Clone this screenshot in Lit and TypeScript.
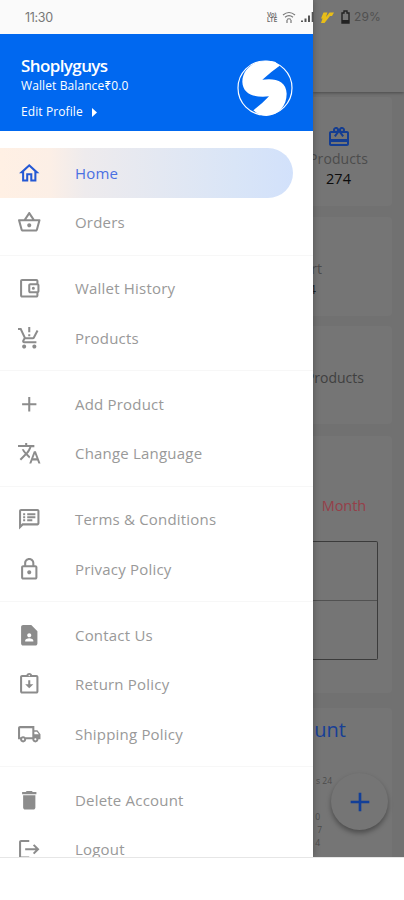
import { LitElement, html, css, svg } from "lit";
import { customElement, property } from "lit/decorators.js";

const ICONS: Record<string, string> = {
  home: "M12 5.69l5 4.5V18h-2v-6H9v6H7v-7.81l5-4.5M12 3L2 12h3v8h6v-6h2v6h6v-8h3L12 3z",
  basket: "M22 9h-4.79l-4.38-6.56c-.19-.28-.51-.42-.83-.42s-.64.14-.83.43L6.79 9H2c-.55 0-1 .45-1 1 0 .09.01.18.04.27l2.54 9.27c.23.84 1 1.46 1.92 1.46h13c.92 0 1.69-.62 1.93-1.46l2.54-9.27L23 10c0-.55-.45-1-1-1zM12 4.8L14.8 9H9.2L12 4.8zM18.5 19l-12.99.01L3.31 11H20.7l-2.2 8zM12 13c-1.1 0-2 .9-2 2s.9 2 2 2 2-.9 2-2-.9-2-2-2z",
  wallet: "M21 7.28V5c0-1.1-.9-2-2-2H5c-1.11 0-2 .9-2 2v14c0 1.1.89 2 2 2h14c1.1 0 2-.9 2-2v-2.28c.59-.35 1-.98 1-1.72V9c0-.74-.41-1.37-1-1.72zM20 9v6h-7V9h7zM5 19V5h14v2h-6c-1.1 0-2 .9-2 2v6c0 1.1.9 2 2 2h6v2H5zM16 10.5a1.5 1.5 0 1 0 0 3 1.5 1.5 0 0 0 0-3z",
  cart: "M13 10h-2V8h2v2zm0-4h-2V1h2v5zM7 18c-1.1 0-1.99.9-1.99 2S5.9 22 7 22s2-.9 2-2-.9-2-2-2zm10 0c-1.1 0-1.99.9-1.99 2s.89 2 1.99 2 2-.9 2-2-.9-2-2-2zm-8.9-5h7.45c.75 0 1.41-.41 1.75-1.03L21 4.96 19.25 4l-3.7 7H8.53L4.27 2H1v2h2l3.6 7.59-1.35 2.44C4.52 15.37 5.48 17 7 17h12v-2H7l1.1-2z",
  add: "M19 13h-6v6h-2v-6H5v-2h6V5h2v6h6v2z",
  translate: "M12.87 15.07l-2.54-2.51.03-.03c1.74-1.94 2.98-4.17 3.71-6.53H17V4h-7V2H8v2H1v1.99h11.17C11.5 7.92 10.44 9.75 9 11.35 8.07 10.32 7.3 9.19 6.69 8h-2c.73 1.63 1.73 3.17 2.98 4.56l-5.09 5.02L4 19l5-5 3.11 3.11.76-2.04zM18.5 10h-2L12 22h2l1.12-3h4.75L21 22h2l-4.5-12zm-2.62 7l1.62-4.33L19.12 17h-3.24z",
  notes: "M20 2H4c-1.1 0-1.99.9-1.99 2L2 22l4-4h14c1.1 0 2-.9 2-2V4c0-1.1-.9-2-2-2zm0 14H5.17L4 17.17V4h16v12zM6 12h2v2H6zm0-3h2v2H6zm0-3h2v2H6zm4 6h5v2h-5zm0-3h8v2h-8zm0-3h8v2h-8z",
  lock: "M18 8h-1V6c0-2.76-2.24-5-5-5S7 3.24 7 6v2H6c-1.1 0-2 .9-2 2v10c0 1.1.9 2 2 2h12c1.1 0 2-.9 2-2V10c0-1.1-.9-2-2-2zM9 6c0-1.66 1.34-3 3-3s3 1.34 3 3v2H9V6zm9 14H6V10h12v10zm-6-3c1.1 0 2-.9 2-2s-.9-2-2-2-2 .9-2 2 .9 2 2 2z",
  contact: "M14 2H6c-1.1 0-2 .9-2 2v16c0 1.1.89 2 1.99 2H18c1.1 0 2-.9 2-2V8l-6-6zm-2 8c1.1 0 2 .9 2 2s-.9 2-2 2-2-.9-2-2 .9-2 2-2zm4 8H8v-.57c0-.81.48-1.53 1.22-1.85a6.95 6.95 0 0 1 5.56 0c.74.32 1.22 1.04 1.22 1.85V18z",
  returned: "M16 12h-3V8h-2v4H8l4 4 4-4zM19 3h-4.18C14.4 1.84 13.3 1 12 1s-2.4.84-2.82 2H5c-1.1 0-2 .9-2 2v14c0 1.1.9 2 2 2h14c1.1 0 2-.9 2-2V5c0-1.1-.9-2-2-2zm-7-.25c.41 0 .75.34.75.75s-.34.75-.75.75-.75-.34-.75-.75.34-.75.75-.75zM19 19H5V5h14v14z",
  shipping: "M20 8h-3V4H3c-1.1 0-2 .9-2 2v11h2c0 1.66 1.34 3 3 3s3-1.34 3-3h6c0 1.66 1.34 3 3 3s3-1.34 3-3h2v-5l-3-4zm-.5 1.5l1.96 2.5H17V9.5h2.5zM6 18c-.55 0-1-.45-1-1s.45-1 1-1 1 .45 1 1-.45 1-1 1zm2.22-3c-.55-.61-1.33-1-2.22-1s-1.67.39-2.22 1H3V6h12v9H8.22zM18 18c-.55 0-1-.45-1-1s.45-1 1-1 1 .45 1 1-.45 1-1 1z",
  trash: "M6 19c0 1.1.9 2 2 2h8c1.1 0 2-.9 2-2V7H6v12zM19 4h-3.5l-1-1h-5l-1 1H5v2h14V4z",
  logout: "M17 7l-1.41 1.41L18.17 11H8v2h10.17l-2.58 2.58L17 17l5-5zM4 5h8V3H4c-1.1 0-2 .9-2 2v14c0 1.1.9 2 2 2h8v-2H4V5z",
  redeem: "M20 6h-2.18c.11-.31.18-.65.18-1 0-1.66-1.34-3-3-3-1.05 0-1.96.54-2.5 1.35l-.5.67-.5-.68C10.96 2.54 10.05 2 9 2 7.34 2 6 3.34 6 5c0 .35.07.69.18 1H4c-1.11 0-1.99.89-1.99 2L2 19c0 1.11.89 2 2 2h16c1.11 0 2-.89 2-2V8c0-1.11-.89-2-2-2zm-5-2c.55 0 1 .45 1 1s-.45 1-1 1-1-.45-1-1 .45-1 1-1zM9 4c.55 0 1 .45 1 1s-.45 1-1 1-1-.45-1-1 .45-1 1-1zm11 15H4v-2h16v2zm0-5H4V8h5.08L7 10.83 8.62 12 11 8.76l1-1.36 1 1.36L15.38 12 17 10.83 14.92 8H20v6z",
};

const MENU: [string, string][][] = [
  [["home", "Home"], ["basket", "Orders"]],
  [["wallet", "Wallet History"], ["cart", "Products"]],
  [["add", "Add Product"], ["translate", "Change Language"]],
  [["notes", "Terms & Conditions"], ["lock", "Privacy Policy"]],
  [["contact", "Contact Us"], ["returned", "Return Policy"], ["shipping", "Shipping Policy"]],
  [["trash", "Delete Account"], ["logout", "Logout"]],
];

@customElement("md-icon")
class MdIcon extends LitElement {
  @property() name = "";
  static styles = css`
    :host { display: block; width: 24px; height: 24px; flex: none; }
    svg { display: block; width: 100%; height: 100%; fill: currentColor; }
  `;
  render() {
    return html`<svg viewBox="0 0 24 24">${svg`<path fill-rule="evenodd" d=${ICONS[this.name]}></path>`}</svg>`;
  }
}

@customElement("status-bar")
class StatusBar extends LitElement {
  static styles = css`
    :host { display: flex; justify-content: space-between; align-items: center; height: 34px; padding: 0 24px 0 25px; box-sizing: border-box; font: 12.5px/16px Inter, sans-serif; color: #777; }
    .time { letter-spacing: -0.3px; padding-top: 1px; }
    .right { display: flex; align-items: center; }
    .volte { display: grid; font-size: 6px; line-height: 5.5px; font-weight: 600; width: 12px; color: #666; margin-right: 2px; }
    .wifi { width: 14px; height: 12px; margin-left: 1px; }
    .signal { width: 13px; height: 12px; margin-left: 5px; }
    .flash { width: 15px; height: 13px; margin-left: 6px; }
    .battery { width: 9px; height: 14px; margin: 0 4px 0 6px; }
    .pct { color: #505050; width: 26px; font-size: 12px; letter-spacing: 0.1px; white-space: nowrap; }
  `;
  render() {
    return html`
      <span class="time">11:30</span>
      <div class="right">
        <span class="volte"><span>Vo)</span><span>LTE</span></span>
        <svg class="wifi" viewBox="0 0 14 12" fill="none" stroke="#777" stroke-width="1.2">
          <path d="M1 4Q7-1 13 4M3 6.3Q7 3 11 6.3M5 8.5Q7 7 9 8.5"></path>
          <path d="M5 9v3M9 9v3"></path>
        </svg>
        <svg class="signal" viewBox="0 0 13 12" fill="#555">
          <path d="M0 9.5h2V11H0zM3.5 7.5h2V11h-2zM7 4.5h2V11H7zM10.7 1h2v10h-2z"></path>
        </svg>
        <svg class="flash" viewBox="0 0 15 13" fill="#e8bd18">
          <path d="M3.5 1.5H7.5L6 6 9.5 1.5H14L12 5H10L4.5 12H1L2.5 7.5H1z"></path>
        </svg>
        <svg class="battery" viewBox="0 0 9 14">
          <path d="M3 1h3v2h2v10H1V3h2z" fill="none" stroke="#222" stroke-width="1.4"></path>
          <path d="M1 10h7v3H1z" fill="#222"></path>
        </svg>
        <span class="pct">29%</span>
      </div>`;
  }
}

@customElement("side-drawer")
class SideDrawer extends LitElement {
  static styles = css`
    :host { display: flex; flex-direction: column; background: #fff; color: #999; }
    .strip { height: 34px; background: #fafafa; flex: none; }
    .head { height: 97px; flex: none; box-sizing: border-box; background: #0068f0; color: #fff; display: flex; justify-content: space-between; align-items: flex-start; padding: 20px 19px 0 21px; }
    .who { display: flex; flex-direction: column; white-space: nowrap; }
    .name { font-size: 17px; line-height: 23px; font-weight: 600; letter-spacing: -0.6px; }
    .bal { font-size: 12px; line-height: 16px; font-weight: 500; letter-spacing: 0.1px; margin-top: 1px; }
    .edit { display: flex; align-items: center; gap: 9px; font-size: 12px; line-height: 16px; font-weight: 500; letter-spacing: 0.1px; margin-top: 10px; }
    .tri { width: 5px; height: 9px; fill: #fff; }
    .logo { width: 58px; height: 58px; margin-top: 5px; }
    nav { padding-top: 17px; }
    .group + .group { border-top: 1px solid #f7f7f7; margin-top: 7.5px; padding-top: 8px; }
    .row { height: 49.5px; display: flex; align-items: center; gap: 33.5px; padding-left: 17px; margin-right: 20px; font-size: 15px; letter-spacing: 0.2px; white-space: nowrap; box-sizing: border-box; }
    .active { color: #4a70e2; background: linear-gradient(90deg, #fff0e4 0, #fcefe6 50px, #eeebed 85px, #d9e5f7 235px, #d2e1fb 100%); border-radius: 0 25px 25px 0; }
    .active md-icon { color: #2458d4; }
    md-icon { color: #8c8c8c; width: 24.5px; height: 24.5px; }
  `;
  render() {
    return html`
      <div class="strip"></div>
      <div class="head">
        <div class="who">
          <span class="name">Shoplyguys</span>
          <span class="bal">Wallet Balance₹0.0</span>
          <span class="edit">Edit Profile <svg class="tri" viewBox="0 0 5 9"><path d="M0 0l5 4.5L0 9z"></path></svg></span>
        </div>
        <svg class="logo" viewBox="49 56 174 174">
          <circle cx="136" cy="143" r="81" fill="none" stroke="#fff" stroke-width="3.5"></circle>
          <path fill="#fff" d="M112 66Q138 57 166 64L180 76Q154 94 128 118C166 112 200 122 201 160C201 196 178 224 140 227Q118 225 101 210Q128 190 148 168C106 173 69 162 68 124C68 96 88 74 112 66z"></path>
        </svg>
      </div>
      <nav>
        ${MENU.map((group) => html`<div class="group">
          ${group.map(([icon, label]) => html`<div class="row ${icon === "home" ? "active" : ""}">
            <md-icon name=${icon}></md-icon><span>${label}</span>
          </div>`)}
        </div>`)}
      </nav>`;
  }
}

@customElement("dimmed-page")
class DimmedPage extends LitElement {
  static styles = css`
    :host { display: flex; flex-direction: column; background: #717171; overflow: hidden; color: #4c4c4c; }
    .bar { height: 92px; flex: none; background: #757575; box-shadow: 0 1px 3px #4a4a4a; margin-bottom: 5px; }
    .card { flex: none; box-sizing: border-box; background: #757575; margin-right: 12px; border-radius: 0 4px 4px 0; white-space: nowrap; display: flex; flex-direction: column; align-items: flex-end; }
    .total { height: 109px; margin-bottom: 11px; padding: 28px 28px 0 0; align-items: center; font-size: 14px; line-height: 20px; }
    .total md-icon { color: #143d91; }
    .total .label { letter-spacing: 0.1px; }
    .total b { color: #0c0c0c; font-size: 14.5px; font-weight: 500; }
    .sort { height: 99px; margin-bottom: 10px; padding: 42px 70px 0 0; font-size: 14px; line-height: 20px; }
    .sort b { padding-right: 6px; font-weight: 500; color: #222; font-size: 13px; }
    .low { height: 98px; margin-bottom: 12px; padding: 42px 28px 0 0; font-size: 14px; line-height: 20px; color: #404040; }
    .chart { height: 257px; margin-bottom: 15px; padding: 60px 14px 0 0; align-items: stretch; }
    .month { text-align: right; color: #963f49; font-size: 14.5px; line-height: 20px; padding-right: 12px; margin-bottom: 24.5px; letter-spacing: -0.1px; }
    .grid { border: 1.5px solid #3b3b3b; border-left: 0; height: 119px; box-sizing: border-box; display: grid; grid-template-rows: 1fr 1fr; border-radius: 0 2px 2px 0; }
    .cell + .cell { border-top: 1px solid #515151; }
    .account { height: 160px; padding: 8px 46px 0 0; font-size: 8.5px; line-height: 13px; }
    .title { font-size: 20px; line-height: 28px; color: #173f96; margin-bottom: 30px; }
    .year { padding-right: 14px; margin-bottom: 23px; }
    .n { padding-right: 26px; }
    .n.wide { padding-right: 24px; }
  `;
  render() {
    return html`
      <div class="bar"></div>
      <div class="card total"><md-icon name="redeem"></md-icon><span class="label">Products</span><b>274</b></div>
      <div class="card sort"><span>rt</span><b>4</b></div>
      <div class="card low"><span>Products</span></div>
      <div class="card chart"><span class="month">Month</span><div class="grid"><div class="cell"></div><div class="cell"></div></div></div>
      <div class="card account">
        <span class="title">unt</span><span class="year">s 24</span>
        <span class="n">0</span><span class="n wide">7</span><span class="n">4</span>
      </div>`;
  }
}

@customElement("app-root")
class AppRoot extends LitElement {
  static styles = css`
    :host { display: block; height: 900px; background: #fff; font-family: "Open Sans", "Noto Sans", sans-serif; }
    .screen { position: relative; display: grid; grid-template-columns: 313px 1fr; height: 858px; overflow: hidden; box-sizing: border-box; border-bottom: 1px solid #e6e6e6; }
    side-drawer { overflow: hidden; z-index: 1; box-shadow: 0 0 7px rgba(0, 0, 0, 0.3); }
    status-bar { position: absolute; inset: 0 0 auto 0; z-index: 2; }
    .fab { position: absolute; right: 16px; bottom: 27px; width: 57px; height: 57px; border-radius: 50%; background: #757575; box-shadow: 0 3px 5px rgba(0, 0, 0, 0.35); display: grid; place-items: center; color: #123f98; }
    .fab md-icon { width: 32px; height: 32px; }
  `;
  render() {
    return html`<div class="screen">
      <side-drawer></side-drawer>
      <dimmed-page></dimmed-page>
      <div class="fab"><md-icon name="add"></md-icon></div>
      <status-bar></status-bar>
    </div>`;
  }
}
